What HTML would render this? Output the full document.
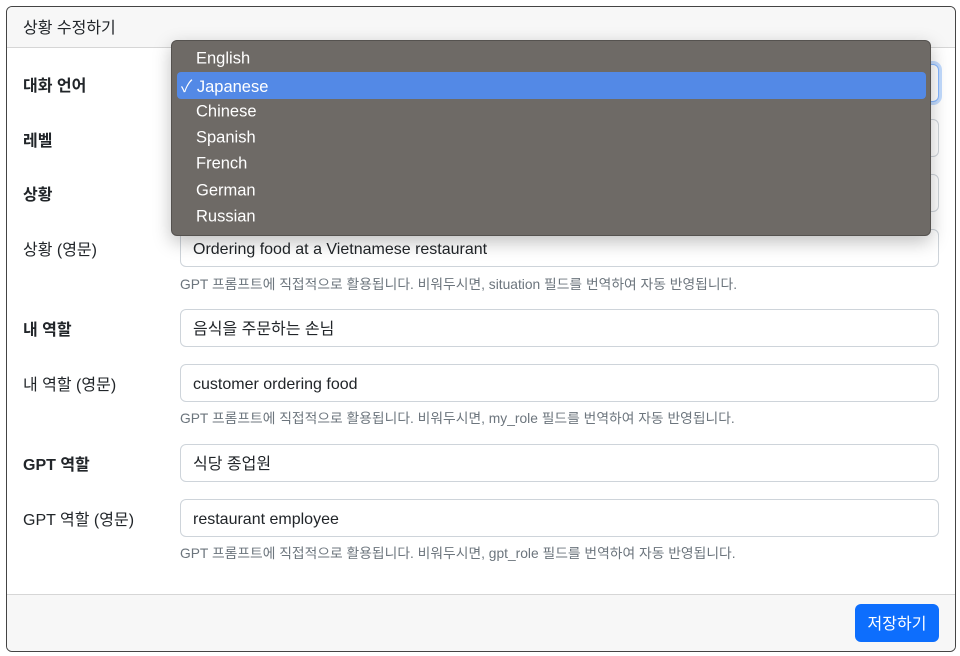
<!DOCTYPE html>
<html><head><meta charset="utf-8"><style>
*{box-sizing:border-box;margin:0;padding:0}
body{width:960px;height:656px;background:#fff;font-family:"Liberation Sans","Noto Sans CJK KR",sans-serif;color:#212529;position:relative;overflow:hidden}
.card{position:absolute;left:6px;top:6px;width:950px;height:646px;border:1px solid #444;border-radius:6px;overflow:hidden}
.hd{position:absolute;left:0;top:0;right:0;height:41px;background:#f7f7f7;border-bottom:1px solid #d6d6d6;font-size:16px;line-height:44px;padding-left:16px}
.ft{position:absolute;left:0;bottom:0;right:0;height:57px;background:#f7f7f7;border-top:1px solid #d6d6d6}
.btn{position:absolute;right:16px;top:9px;width:84px;height:38px;background:#0d6efd;color:#fff;border-radius:6px;font-size:16px;line-height:42px;text-align:center}
.lb{position:absolute;left:23px;font-size:16px;transform:translateY(-50%)}
.b{font-weight:bold}
.in{position:absolute;left:180px;width:759px;height:38px;border:1px solid #ced4da;border-radius:6px;font-size:16px;line-height:40px;padding-left:12px;background:#fff}
.hp{position:absolute;left:180px;font-size:13.8px;color:#6c757d;transform:translateY(-50%)}
.dd{position:absolute;left:171px;top:40px;width:760px;height:196px;background:#6e6a66;border:1px solid #55524f;border-radius:6px;box-shadow:0 6px 18px rgba(0,0,0,.25)}
.op{position:absolute;left:24px;color:#fff;font-size:16.5px;transform:translateY(-50%)}
.hl{position:absolute;left:5px;top:31px;width:749px;height:27px;background:#5389e6;border-radius:4px}
</style></head><body>
<div class="card">
<div class="hd">상황 수정하기</div>
<div class="ft"><div class="btn">저장하기</div></div>
</div>
<div class="in" style="top:64px;border-color:#86b7fe;box-shadow:0 0 0 3px rgba(13,110,253,.25)"></div>
<div class="in" style="top:119px"></div>
<div class="in" style="top:174px"></div>
<div class="lb b" style="top:84px">대화 언어</div>
<div class="lb b" style="top:139px">레벨</div>
<div class="lb b" style="top:193px">상황</div>
<div class="lb" style="top:248px">상황 (영문)</div>
<div class="lb b" style="top:328px">내 역할</div>
<div class="lb" style="top:383px">내 역할 (영문)</div>
<div class="lb b" style="top:463px">GPT 역할</div>
<div class="lb" style="top:518px">GPT 역할 (영문)</div>
<div class="in" style="top:229px">Ordering food at a Vietnamese restaurant</div>
<div class="hp" style="top:283px">GPT 프롬프트에 직접적으로 활용됩니다. 비워두시면, situation 필드를 번역하여 자동 반영됩니다.</div>
<div class="in" style="top:309px">음식을 주문하는 손님</div>
<div class="in" style="top:364px">customer ordering food</div>
<div class="hp" style="top:417px">GPT 프롬프트에 직접적으로 활용됩니다. 비워두시면, my_role 필드를 번역하여 자동 반영됩니다.</div>
<div class="in" style="top:444px">식당 종업원</div>
<div class="in" style="top:499px">restaurant employee</div>
<div class="hp" style="top:552px">GPT 프롬프트에 직접적으로 활용됩니다. 비워두시면, gpt_role 필드를 번역하여 자동 반영됩니다.</div>
<div class="dd">
<div class="hl"></div>
<div class="op" style="top:18px">English</div>
<div class="op" style="top:44px;left:9px">✓ Japanese</div>
<div class="op" style="top:71px">Chinese</div>
<div class="op" style="top:97px">Spanish</div>
<div class="op" style="top:123px">French</div>
<div class="op" style="top:150px">German</div>
<div class="op" style="top:176px">Russian</div>
</div>
</body></html>
